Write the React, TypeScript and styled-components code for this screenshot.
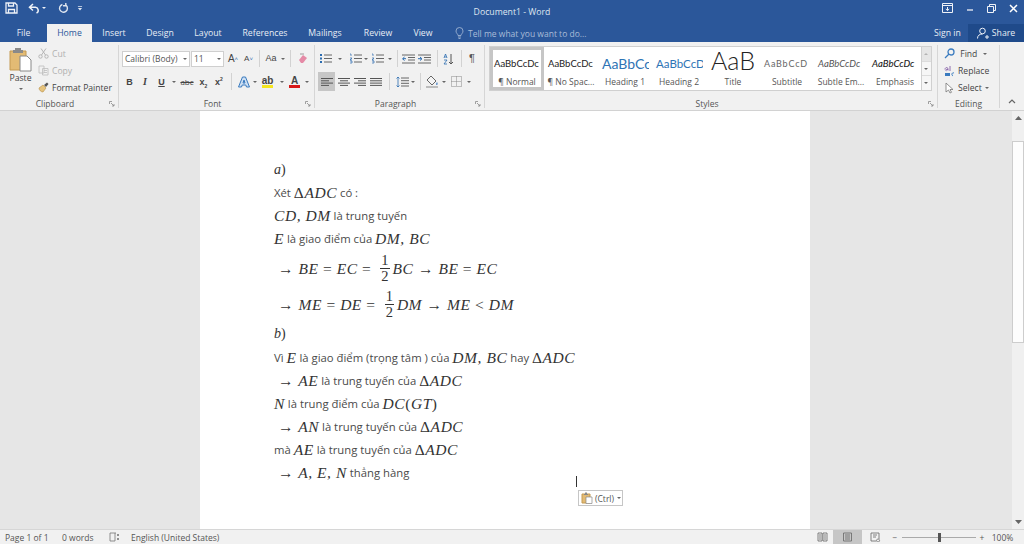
import React from 'react';
import styled, { createGlobalStyle } from 'styled-components';

const GlobalStyle = createGlobalStyle`
  html, body { margin: 0; padding: 0; height: 544px; overflow: hidden; background: #e6e6e6; }
  body { font-family: "Open Sans", "Noto Sans", sans-serif; font-size: 9px; color: #444; }
  #root { height: 544px; }
  svg { display: block; }
`;

const Window = styled.div`
  width: 1024px;
  height: 544px;
  display: flex;
  flex-direction: column;
`;

/* title bar */
const TitleBar = styled.header`
  height: 24px;
  flex: none;
  background: #2b579a;
  display: grid;
  grid-template-columns: 1fr auto 1fr;
  align-items: center;
  color: #e4eaf3;
`;

const QuickAccess = styled.div`
  display: flex;
  align-items: center;
  padding: 0 0 8px 3px;
`;

const Title = styled.div`
  font-size: 8.7px;
  text-align: center;
  color: #dfe6f0;
`;

const WindowButtons = styled.div`
  display: flex;
  justify-content: flex-end;
  align-items: center;
  padding-bottom: 8px;
`;

const WinButton = styled.span<{ $w: number; $ml?: number }>`
  width: ${p => p.$w}px;
  margin-left: ${p => p.$ml ?? 0}px;
  display: flex;
  justify-content: center;
`;

/* tabs */
const TabBar = styled.nav`
  height: 18px;
  flex: none;
  background: #2b579a;
  display: flex;
  align-items: stretch;
`;

const Tab = styled.div<{ $w: number; $active?: boolean }>`
  width: ${p => p.$w}px;
  flex: none;
  display: flex;
  align-items: center;
  justify-content: center;
  font-size: 8.7px;
  color: ${p => (p.$active ? '#2b579a' : '#e8edf5')};
  background: ${p => (p.$active ? '#f1f1f1' : 'transparent')};
`;

const TellMe = styled.div`
  margin-left: 13px;
  display: flex;
  align-items: center;
  gap: 4px;
  color: #a9bcd8;
  font-size: 8.5px;
  flex: 1;
`;

const SignIn = styled.div`
  width: 26px;
  margin-right: 8px;
  display: flex;
  align-items: center;
  color: #e8edf5;
  font-size: 8.7px;
  white-space: nowrap;
`;

const Share = styled.div`
  width: 56px;
  background: #1f4a8a;
  color: #e8edf5;
  display: flex;
  align-items: center;
  justify-content: center;
  gap: 3px;
  font-size: 8.7px;
`;

/* ribbon */
const Ribbon = styled.div`
  height: 69px;
  flex: none;
  background: #f1f1f1;
  border-bottom: 1px solid #d2d2d2;
  box-sizing: border-box;
  padding-top: 3px;
  display: flex;
`;

const Group = styled.section<{ $w: number }>`
  width: ${p => p.$w}px;
  flex: none;
  box-sizing: border-box;
  height: 63px;
  border-right: 1px solid #d6d6d6;
  display: flex;
  flex-direction: column;
`;

const GroupBody = styled.div<{ $pl?: number }>`
  height: 52px;
  flex: none;
  box-sizing: border-box;
  padding-left: ${p => p.$pl ?? 0}px;
  display: flex;
`;

const GroupLabel = styled.div<{ $plain?: boolean }>`
  display: grid;
  grid-template-columns: 1fr auto 1fr;
  align-items: center;
  height: 14px;
  padding-top: 1px;
  font-size: 8.5px;
  color: #555;
  padding-right: ${p => (p.$plain ? 0 : 8)}px;
  svg { justify-self: end; grid-column: 3; margin-right: -5px; }
`;

const GroupName = styled.span`
  grid-column: 2;
`;

const ToolRows = styled.div`
  display: flex;
  flex-direction: column;
  gap: 4px;
  padding-top: 4px;
`;

const ToolRow = styled.div`
  display: flex;
  align-items: center;
  height: 19px;
`;

const Tool = styled.span<{ $w: number; $on?: boolean }>`
  width: ${p => p.$w}px;
  height: 19px;
  flex: none;
  display: flex;
  align-items: center;
  justify-content: center;
  background: ${p => (p.$on ? '#c6c6c6' : 'transparent')};
  color: #444;
`;

const Sep = styled.span<{ $w: number }>`
  width: ${p => p.$w}px;
  flex: none;
  display: flex;
  justify-content: center;
  &::before { content: ''; width: 1px; height: 17px; background: #d2d2d2; }
`;

const Caret = styled.i<{ $w?: number; $c?: string; $ml?: number; $flip?: boolean; $faint?: boolean }>`
  width: ${p => p.$w ?? 7}px;
  margin-left: ${p => p.$ml ?? 0}px;
  flex: none;
  display: flex;
  justify-content: center;
  transform: ${p => (p.$flip ? 'rotate(180deg)' : 'none')};
  opacity: ${p => (p.$faint ? 0.4 : 1)};
  &::before {
    content: '';
    border-left: 2px solid transparent;
    border-right: 2px solid transparent;
    border-top: 2px solid ${p => p.$c ?? '#666'};
  }
`;

const PasteColumn = styled.div`
  width: 38px;
  flex: none;
  display: flex;
  flex-direction: column;
  align-items: center;
  padding: 2px 0 0 3px;
  box-sizing: border-box;
  font-size: 8.7px;
  line-height: 12px;
  color: #444;
`;

const PasteCaret = styled(Caret)`
  margin-top: 4px;
`;

const MiniStack = styled.div`
  display: flex;
  flex-direction: column;
`;

const MiniRow = styled.div<{ $off?: boolean }>`
  height: 17px;
  display: flex;
  align-items: center;
  gap: 3px;
  font-size: 8.6px;
  white-space: nowrap;
  color: ${p => (p.$off ? '#b0b0b0' : '#444')};
`;

const FontBox = styled.div<{ $w: number }>`
  width: ${p => p.$w}px;
  height: 16px;
  box-sizing: border-box;
  background: #fff;
  border: 1px solid #cfcfcf;
  margin-right: 1px;
  flex: none;
  display: flex;
  align-items: center;
  justify-content: space-between;
  padding: 0 2px;
  font-size: 8.5px;
  color: #555;
  white-space: nowrap;
`;

const Bold = styled.span`
  font-weight: 700;
  font-size: 9px;
  color: #444;
  font-family: "Liberation Sans", sans-serif;
`;

const Italic = styled(Bold)`
  font-style: italic;
  font-family: "Liberation Serif", serif;
  font-size: 10px;
`;

const Under = styled(Bold)`
  text-decoration: underline;
`;

const Strike = styled.span`
  font-size: 8px;
  text-decoration: line-through;
  color: #444;
`;

const Script = styled(Bold)`
  sub, sup { font-size: 5px; line-height: 0; }
`;

const Glyph = styled.span<{ $s: number; $c?: string }>`
  font-size: ${p => p.$s}px;
  color: ${p => p.$c ?? '#444'};
  font-family: "Liberation Sans", sans-serif;
  line-height: 1;
`;

const LetterBar = styled.span<{ $c: string }>`
  display: flex;
  flex-direction: column;
  align-items: center;
  font-weight: 700;
  font-size: 10px;
  line-height: 9px;
  color: #444;
  font-family: "Liberation Sans", sans-serif;
  &::after { content: ''; width: 11px; height: 3px; background: ${p => p.$c}; }
`;

/* styles gallery */
const Gallery = styled.div`
  margin: 1px 0 0 4px;
  height: 45px;
  width: 433px;
  flex: none;
  box-sizing: border-box;
  background: #fff;
  border: 1px solid #d0d0d0;
  display: flex;
`;

const StyleItem = styled.div<{ $on?: boolean }>`
  width: 54px;
  flex: none;
  box-sizing: border-box;
  border: ${p => (p.$on ? '3px solid #c6c6c6' : '3px solid transparent')};
  display: flex;
  flex-direction: column;
  align-items: center;
  overflow: hidden;
`;

const Preview = styled.div<{ $size: number; $color?: string; $italic?: boolean; $bold?: boolean; $sp?: number; $light?: boolean }>`
  height: 26px;
  width: 100%;
  box-sizing: border-box;
  padding-left: ${p => (p.$light ? 0 : 1)}px;
  flex: none;
  display: flex;
  align-items: ${p => (p.$light ? 'flex-start' : 'center')};
  justify-content: ${p => (p.$light ? 'center' : 'flex-start')};
  white-space: nowrap;
  overflow: hidden;
  font-family: Lato, "Open Sans", sans-serif;
  line-height: ${p => (p.$light ? '21px' : 'normal')};
  font-weight: ${p => (p.$light ? 300 : p.$bold ? 500 : 400)};
  font-size: ${p => p.$size}px;
  color: ${p => p.$color ?? '#222'};
  font-style: ${p => (p.$italic ? 'italic' : 'normal')};
  letter-spacing: ${p => p.$sp ?? 0}px;
`;

const StyleName = styled.div`
  font-size: 8.5px;
  color: #555;
  white-space: nowrap;
  line-height: 12px;
`;

const GalleryArrows = styled.div`
  width: 10px;
  flex: none;
  height: 45px;
  margin-top: 1px;
  box-sizing: border-box;
  border: 1px solid #d0d0d0;
  border-left: none;
  display: flex;
  flex-direction: column;
`;

const GalleryArrow = styled.span<{ $dim?: boolean }>`
  flex: 1;
  display: flex;
  align-items: center;
  border-bottom: 1px solid #dcdcdc;
  background: ${p => (p.$dim ? '#e6e6e6' : '#f6f6f6')};
  &:last-child { border-bottom: none; }
`;

const EditStack = styled.div`
  display: flex;
  flex-direction: column;
  padding-left: 6px;
`;

const Collapse = styled.div`
  flex: 1;
  display: flex;
  align-items: flex-end;
  justify-content: flex-end;
  padding: 0 8px 4px 0;
  height: 63px;
  box-sizing: border-box;
`;

/* document */
const Workspace = styled.main`
  flex: 1;
  min-height: 0;
  display: flex;
  background: #e6e6e6;
`;

const Canvas = styled.div`
  flex: 1;
  padding-left: 200px;
  overflow: hidden;
`;

const Page = styled.article`
  position: relative;
  width: 610px;
  height: 100%;
  box-sizing: border-box;
  background: #fff;
  padding: 47px 0 0 74px;
  font-size: 11.3px;
  color: #4a4a4a;
`;

const Line = styled.div<{ $h?: number; $indent?: boolean }>`
  height: ${p => p.$h ?? 23}px;
  display: flex;
  align-items: center;
  white-space: pre;
  padding-left: ${p => (p.$indent ? 4 : 0)}px;
`;

const M = styled.span`
  font-family: "Liberation Serif", serif;
  font-style: italic;
  font-size: 15.5px;
  letter-spacing: 0.55px;
  color: #333;
`;

const PartLabel = styled(M)`
  font-size: 14px;
  letter-spacing: 0;
`;

const Up = styled.span`
  font-style: normal;
`;

const Frac = styled.span`
  display: inline-flex;
  flex-direction: column;
  align-items: center;
  margin: 0 3px 0 9px;
  font-family: "Liberation Serif", serif;
  font-size: 14.5px;
  line-height: 15px;
  color: #333;
`;

const FracTop = styled.span`
  padding: 0 1px;
  border-bottom: 1px solid #333;
`;

const TextCursor = styled.span`
  position: absolute;
  left: 376px;
  top: 365px;
  width: 1px;
  height: 11px;
  background: #333;
`;

const PasteChip = styled.div`
  position: absolute;
  left: 378px;
  top: 379px;
  width: 45px;
  height: 16px;
  box-sizing: border-box;
  background: #fff;
  border: 1px solid #c6c6c6;
  display: flex;
  align-items: center;
  gap: 2px;
  padding-left: 2px;
  font-size: 8.5px;
  color: #555;
`;

const ScrollBar = styled.aside`
  width: 12px;
  flex: none;
  background: #f0f0f0;
  display: flex;
  flex-direction: column;
  align-items: stretch;
`;

const ScrollArrow = styled.span<{ $down?: boolean }>`
  height: 14px;
  display: flex;
  align-items: center;
  justify-content: center;
  margin-top: ${p => (p.$down ? 'auto' : '0')};
`;

const ScrollThumb = styled.span`
  height: 202px;
  margin-top: 16px;
  box-sizing: border-box;
  background: #fdfdfd;
  border: 1px solid #cdcdcd;
`;

/* status bar */
const StatusBar = styled.footer`
  height: 15px;
  flex: none;
  background: #f1f1f1;
  border-top: 1px solid #d6d6d6;
  box-sizing: border-box;
  display: flex;
  align-items: center;
  font-size: 8.5px;
  color: #555;
  padding-left: 5px;
`;

const StatusItem = styled.span<{ $w: number; $on?: boolean; $center?: boolean }>`
  width: ${p => p.$w}px;
  flex: none;
  height: 14px;
  display: flex;
  align-items: center;
  justify-content: ${p => (p.$center ? 'center' : 'flex-start')};
  background: ${p => (p.$on ? '#c6c6c6' : 'transparent')};
  white-space: nowrap;
`;

const Slider = styled.span`
  position: relative;
  width: 74px;
  height: 1px;
  flex: none;
  background: #aaa;
`;

const SliderThumb = styled.span`
  position: absolute;
  left: 36px;
  top: -4px;
  width: 3px;
  height: 9px;
  background: #555;
`;

/* drawings */
const Launcher = () => (
  <svg width="6" height="6" viewBox="0 0 6 6" fill="none" stroke="#8a8a8a" strokeWidth="0.8">
    <path d="M.5 3V.5H3M2 2l3 3M5 3v2H3" />
  </svg>
);

const Lines = ({ a }: { a: 'l' | 'c' | 'r' | 'j' }) => {
  const rows: [number, number][] = {
    l: [[0, 12], [0, 8], [0, 12], [0, 8]],
    c: [[0, 12], [2, 10], [0, 12], [2, 10]],
    r: [[0, 12], [4, 12], [0, 12], [4, 12]],
    j: [[0, 12], [0, 12], [0, 12], [0, 12]],
  }[a] as [number, number][];
  return (
    <svg width="12" height="10" viewBox="0 0 12 10" stroke="#555" strokeWidth="1">
      {rows.map(([x1, x2], i) => <line key={i} x1={x1} x2={x2} y1={1.5 + i * 2.3} y2={1.5 + i * 2.3} />)}
    </svg>
  );
};

const ListIcon = ({ num }: { num?: boolean }) => (
  <svg width="13" height="11" viewBox="0 0 13 11" fill="none">
    <path d="M5 2h8M5 5.5h8M5 9h8" stroke="#666" />
    {num
      ? <path d="M1 1h1v2M1 5h2L1 7h2M1 8h2v2H1" stroke="#2b6cb0" strokeWidth=".7" />
      : <path d="M1 1h2v2H1zM1 4.5h2v2H1zM1 8h2v2H1z" fill="#2b6cb0" />}
  </svg>
);

const IndentIcon = ({ inc }: { inc?: boolean }) => (
  <svg width="13" height="10" viewBox="0 0 13 10" fill="none">
    <path d="M0 1h13M6 3.5h7M6 6h7M0 9h13" stroke="#666" />
    <path d={inc ? 'M0 4.700h3M2 3l2 1.800L2 6.500' : 'M4 4.700H1M2.500 3L.5 4.800 2.500 6.500'} stroke="#2b6cb0" />
  </svg>
);

const ViewIcon = ({ kind }: { kind: 'read' | 'print' | 'web' }) => (
  <svg width="11" height="10" viewBox="0 0 11 10" fill="none" stroke="#666" strokeWidth=".8">
    {kind === 'read' && <path d="M1 1h4v8H1zM6 1h4v8H6zM2 3h2M2 5h2M2 7h2M7 3h2M7 5h2M7 7h2" />}
    {kind === 'print' && <path d="M1.500 1h8v8h-8zM3 3h5M3 5h5M3 7h5" />}
    {kind === 'web' && <path d="M1 1h8v6M1 1v8h5M3 3h4M3 5h3M8 7a1.500 1.500 0 1 0 .1 0" />}
  </svg>
);

const Arrow = () => <Up>→</Up>;

const Delta = () => <Up>Δ</Up>;

const App: React.FC = () => (
  <Window>
    <GlobalStyle />
    <TitleBar>
      <QuickAccess>
        <WinButton $w={16}>
          <svg width="13" height="12" viewBox="0 0 13 12" fill="none" stroke="#eef2f8" strokeWidth="1.300">
            <path d="M1 1h9l2 2v8H1zM3.500 1v3h5V1M3.500 11V7.500h6V11" />
          </svg>
        </WinButton>
        <WinButton $w={14} $ml={8}>
          <svg width="12" height="11" viewBox="0 0 12 11" fill="none" stroke="#eef2f8" strokeWidth="1.500">
            <path d="M5 1L1.500 4.300 5 7.500M2 4.300h5.500a3 3 0 0 1 1 5.700" />
          </svg>
        </WinButton>
        <Caret $w={6} $c="#eef2f8" />
        <WinButton $w={14} $ml={9}>
          <svg width="11" height="11" viewBox="0 0 12 12" fill="none" stroke="#dfe6f0" strokeWidth="1.500">
            <path d="M8.800 2.500a4.300 4.300 0 1 1-4-.9M8.500 0v3H5.500" />
          </svg>
        </WinButton>
        <WinButton $w={6} $ml={7}>
          <svg width="6" height="5" viewBox="0 0 7 6" fill="#dfe6f0">
            <path d="M1 0h5v1H1zM1 2.500h5L3.500 5.500z" />
          </svg>
        </WinButton>
      </QuickAccess>
      <Title>Document1 - Word</Title>
      <WindowButtons>
        <WinButton $w={22}>
          <svg width="11" height="10" viewBox="0 0 11 10" fill="none" stroke="#eef2f8">
            <path d="M.5.500h10v9H.500zM.5 2.500h10M5.500 4v3.500M3.800 6l1.700 1.500L7.200 6" />
          </svg>
        </WinButton>
        <WinButton $w={23}>
          <svg width="8" height="8" viewBox="0 0 8 8" stroke="#eef2f8" strokeWidth="1.300"><path d="M1 6h6" /></svg>
        </WinButton>
        <WinButton $w={21}>
          <svg width="9" height="9" viewBox="0 0 9 9" fill="none" stroke="#eef2f8">
            <path d="M.5 2.500h6v6h-6zM2.500 2.500v-2h6v6h-2" />
          </svg>
        </WinButton>
        <WinButton $w={22}>
          <svg width="9" height="9" viewBox="0 0 9 9" stroke="#fff" strokeWidth="1.500"><path d="M1 1l7 7M8 1L1 8" /></svg>
        </WinButton>
      </WindowButtons>
    </TitleBar>

    <TabBar>
      <Tab $w={47}>File</Tab>
      <Tab $w={45} $active>Home</Tab>
      <Tab $w={44}>Insert</Tab>
      <Tab $w={48}>Design</Tab>
      <Tab $w={48}>Layout</Tab>
      <Tab $w={66}>References</Tab>
      <Tab $w={54}>Mailings</Tab>
      <Tab $w={52}>Review</Tab>
      <Tab $w={38}>View</Tab>
      <TellMe>
        <svg width="9" height="12" viewBox="0 0 9 12" fill="none" stroke="#a9bcd8" strokeWidth=".8">
          <path d="M3 8.500C3 7 1 6.300 1 4a3.500 3.500 0 0 1 7 0c0 2.300-2 3-2 4.500zM3 10h3M3.500 11.500h2" />
        </svg>
        Tell me what you want to do...
      </TellMe>
      <SignIn>Sign in</SignIn>
      <Share>
        <svg width="12" height="12" viewBox="0 0 12 12" fill="none" stroke="#eef2f8">
          <circle cx="5.500" cy="4" r="2.800" />
          <path d="M.5 11.500c0-3 2-4.500 5-4.500M8 10h4M10 8v4" />
        </svg>
        Share
      </Share>
    </TabBar>

    <Ribbon>
      <Group $w={119}>
        <GroupBody>
          <PasteColumn>
            <svg width="24" height="25" viewBox="0 0 24 25">
              <path d="M1 4h16v19H1z" fill="#e3bb74" stroke="#c49a52" />
              <path d="M6 1h6v2h2v3H4V3h2z" fill="#8a8a8a" />
              <path d="M11 9h7l4 4v11H11z" fill="#fff" stroke="#888" />
            </svg>
            <span>Paste</span>
            <PasteCaret />
          </PasteColumn>
          <MiniStack>
            <MiniRow $off>
              <svg width="11" height="11" viewBox="0 0 11 11" fill="none" stroke="#b5b5b5">
                <circle cx="2.500" cy="8.500" r="1.700" /><circle cx="8.500" cy="8.500" r="1.700" />
                <path d="M3.500 7L8 .5M7.500 7L3 .5" />
              </svg>
              Cut
            </MiniRow>
            <MiniRow $off>
              <svg width="11" height="11" viewBox="0 0 11 11" fill="none" stroke="#bdbdbd" strokeWidth=".8">
                <path d="M1 1h5v7H1zM4.500 3.500H10V10H4.500z" />
                <path d="M6 5.500h3M6 7.500h3" />
              </svg>
              Copy
            </MiniRow>
            <MiniRow>
              <svg width="11" height="11" viewBox="0 0 11 11">
                <path d="M1 6l4-3 3 3-3 4c-2 0-4-2-4-4z" fill="#e6c37d" stroke="#b78f46" strokeWidth=".6" />
                <path d="M6 3l3-2.500L10.500 2 8 5z" fill="#555" />
              </svg>
              Format Painter
            </MiniRow>
          </MiniStack>
        </GroupBody>
        <GroupLabel><GroupName>Clipboard</GroupName><Launcher /></GroupLabel>
      </Group>

      <Group $w={196}>
        <GroupBody $pl={3}>
          <ToolRows>
            <ToolRow>
              <FontBox $w={68}>Calibri (Body)<Caret $w={5} /></FontBox>
              <FontBox $w={33}>11<Caret $w={5} /></FontBox>
              <Tool $w={16}><Glyph $s={10}>A</Glyph><Glyph $s={6} $c="#2b6cb0">˄</Glyph></Tool>
              <Tool $w={15}><Glyph $s={8}>A</Glyph><Glyph $s={6} $c="#2b6cb0">˅</Glyph></Tool>
              <Sep $w={7} />
              <Tool $w={16}><Glyph $s={9}>Aa</Glyph></Tool>
              <Caret $w={7} />
              <Sep $w={9} />
              <Tool $w={15}>
                <svg width="12" height="12" viewBox="0 0 12 12">
                  <path d="M2 7l4-5 4 3-4 5H4z" fill="#e58aa6" />
                  <path d="M3 1h4" stroke="#888" strokeWidth=".8" />
                </svg>
              </Tool>
            </ToolRow>
            <ToolRow>
              <Tool $w={15}><Bold>B</Bold></Tool>
              <Tool $w={16}><Italic>I</Italic></Tool>
              <Tool $w={17}><Under>U</Under></Tool>
              <Caret $w={8} />
              <Tool $w={18}><Strike>abc</Strike></Tool>
              <Tool $w={15}><Script>x<sub>2</sub></Script></Tool>
              <Tool $w={16}><Script>x<sup>2</sup></Script></Tool>
              <Sep $w={8} />
              <Tool $w={17}>
                <svg width="12" height="12" viewBox="0 0 12 12" fill="#cfe0f3" stroke="#3a7bbf">
                  <path d="M4.500 1h3L11.500 11H8.500l-.7-2H4.200l-.7 2H.5zM5 7h2L6 4z" />
                </svg>
              </Tool>
              <Caret $w={6} />
              <Tool $w={19}><LetterBar $c="#f5e61e">ab</LetterBar></Tool>
              <Caret $w={9} />
              <Tool $w={17}><LetterBar $c="#d81818">A</LetterBar></Tool>
              <Caret $w={8} />
            </ToolRow>
          </ToolRows>
        </GroupBody>
        <GroupLabel><GroupName>Font</GroupName><Launcher /></GroupLabel>
      </Group>

      <Group $w={170}>
        <GroupBody $pl={3}>
          <ToolRows>
            <ToolRow>
              <Tool $w={15}><ListIcon /></Tool>
              <Caret $w={13} />
              <Tool $w={18}><ListIcon num /></Tool>
              <Caret $w={4} />
              <Tool $w={18}><ListIcon num /></Tool>
              <Caret $w={7} />
              <Sep $w={8} />
              <Tool $w={15}><IndentIcon /></Tool>
              <Tool $w={17}><IndentIcon inc /></Tool>
              <Sep $w={8} />
              <Tool $w={14}>
                <svg width="11" height="12" viewBox="0 0 11 12" fill="none">
                  <path d="M1 5l1.500-4L4 5M1.500 4h2M1 7h3L1 11h3" stroke="#2b6cb0" strokeWidth=".8" />
                  <path d="M8 1v10M6 9l2 2 2-2" stroke="#555" />
                </svg>
              </Tool>
              <Sep $w={12} />
              <Tool $w={10}><Glyph $s={11} $c="#555">¶</Glyph></Tool>
            </ToolRow>
            <ToolRow>
              <Tool $w={17} $on><Lines a="l" /></Tool>
              <Tool $w={17}><Lines a="c" /></Tool>
              <Tool $w={16}><Lines a="r" /></Tool>
              <Tool $w={16}><Lines a="j" /></Tool>
              <Sep $w={11} />
              <Tool $w={14}>
                <svg width="13" height="12" viewBox="0 0 13 12" fill="none">
                  <path d="M5 2h8M5 4.700h8M5 7.300h8M5 10h8" stroke="#666" />
                  <path d="M2 1v10M.5 2.500L2 1l1.500 1.500M.5 9.500L2 11l1.500-1.500" stroke="#2b6cb0" strokeWidth=".8" />
                </svg>
              </Tool>
              <Caret $w={8} />
              <Sep $w={6} />
              <Tool $w={18}>
                <svg width="14" height="13" viewBox="0 0 14 13" fill="none">
                  <path d="M6 1l5 5-4 4-5-5z" fill="#f4f4f4" stroke="#666" />
                  <path d="M12 7c1 1.500 1 3-.3 3S11 8.500 12 7z" fill="#5b8fc9" />
                  <path d="M1 12h12" stroke="#888" />
                </svg>
              </Tool>
              <Caret $w={6} />
              <Tool $w={18}>
                <svg width="11" height="11" viewBox="0 0 11 11" fill="none" stroke="#888" strokeDasharray="1 1">
                  <path d="M.5.500h10v10H.500zM5.500.500v10M.5 5.500h10" />
                </svg>
              </Tool>
              <Caret $w={8} />
            </ToolRow>
          </ToolRows>
        </GroupBody>
        <GroupLabel><GroupName>Paragraph</GroupName><Launcher /></GroupLabel>
      </Group>

      <Group $w={453}>
        <GroupBody>
          <Gallery>
            <StyleItem $on><Preview $size={9.5}>AaBbCcDc</Preview><StyleName>¶ Normal</StyleName></StyleItem>
            <StyleItem><Preview $size={9.5}>AaBbCcDc</Preview><StyleName>¶ No Spac...</StyleName></StyleItem>
            <StyleItem><Preview $size={14} $color="#2e74b5">AaBbCc</Preview><StyleName>Heading 1</StyleName></StyleItem>
            <StyleItem><Preview $size={11.5} $color="#2e74b5">AaBbCcD</Preview><StyleName>Heading 2</StyleName></StyleItem>
            <StyleItem><Preview $size={25} $light>AaB</Preview><StyleName>Title</StyleName></StyleItem>
            <StyleItem><Preview $size={9} $color="#666" $sp={0.8}>AaBbCcD</Preview><StyleName>Subtitle</StyleName></StyleItem>
            <StyleItem><Preview $size={9.5} $color="#555" $italic>AaBbCcDc</Preview><StyleName>Subtle Em...</StyleName></StyleItem>
            <StyleItem><Preview $size={9.5} $italic $bold>AaBbCcDc</Preview><StyleName>Emphasis</StyleName></StyleItem>
          </Gallery>
          <GalleryArrows>
            <GalleryArrow $dim><Caret $w={8} $flip $faint /></GalleryArrow>
            <GalleryArrow><Caret $w={8} /></GalleryArrow>
            <GalleryArrow><Caret $w={8} /></GalleryArrow>
          </GalleryArrows>
        </GroupBody>
        <GroupLabel><GroupName>Styles</GroupName><Launcher /></GroupLabel>
      </Group>

      <Group $w={62}>
        <GroupBody>
          <EditStack>
            <MiniRow>
              <svg width="11" height="11" viewBox="0 0 11 11" fill="none" stroke="#3a7bbf" strokeWidth="1.300">
                <circle cx="7" cy="4" r="3" /><path d="M5 6l-4 4" />
              </svg>
              &nbsp;Find<Caret $w={9} />
            </MiniRow>
            <MiniRow>
              <svg width="11" height="12" viewBox="0 0 11 12" fill="none">
                <path d="M1 4.500C1 2 4 2 4 4v1.500M4 4.500C2 3.500 1 6 2.500 5.700M6 1v5" stroke="#7a4fa0" strokeWidth=".8" />
                <path d="M1 8h5v3H1z" fill="#3a7bbf" />
                <path d="M10 8c-2-1-3 2-1 3" stroke="#3a7bbf" />
              </svg>
              Replace
            </MiniRow>
            <MiniRow>
              <svg width="11" height="12" viewBox="0 0 11 12" fill="#fff" stroke="#777" strokeWidth=".8">
                <path d="M2 1v9l2.500-2 1.500 3 1.500-.7L6 7.500h3z" />
              </svg>
              Select<Caret $w={5} />
            </MiniRow>
          </EditStack>
        </GroupBody>
        <GroupLabel $plain><GroupName>Editing</GroupName></GroupLabel>
      </Group>

      <Collapse>
        <svg width="8" height="5" viewBox="0 0 8 5" fill="none" stroke="#666" strokeWidth="1.200">
          <path d="M1 4l3-3 3 3" />
        </svg>
      </Collapse>
    </Ribbon>

    <Workspace>
      <Canvas>
        <Page>
          <Line><PartLabel>a<Up>)</Up></PartLabel></Line>
          <Line>Xét <M><Delta />ADC</M> có :</Line>
          <Line><M>CD, DM</M> là trung tuyến</Line>
          <Line><M>E</M> là giao điểm của <M>DM, BC</M></Line>
          <Line $h={37} $indent><M><Arrow /> BE <Up>=</Up> EC <Up>=</Up></M><Frac><FracTop>1</FracTop>2</Frac><M>BC <Arrow /> BE <Up>=</Up> EC</M></Line>
          <Line $h={35} $indent><M><Arrow /> ME <Up>=</Up> DE <Up>=</Up></M><Frac><FracTop>1</FracTop>2</Frac><M>DM <Arrow /> ME <Up>&lt;</Up> DM</M></Line>
          <Line $h={24}><PartLabel>b<Up>)</Up></PartLabel></Line>
          <Line>Vì <M>E</M> là giao điểm (trọng tâm ) của <M>DM, BC</M> hay <M><Delta />ADC</M></Line>
          <Line $indent><M><Arrow /> AE</M> là trung tuyến của <M><Delta />ADC</M></Line>
          <Line><M>N</M> là trung điểm của <M>DC<Up>(</Up>GT<Up>)</Up></M></Line>
          <Line $indent><M><Arrow /> AN</M> là trung tuyến của <M><Delta />ADC</M></Line>
          <Line>mà <M>AE</M> là trung tuyến của <M><Delta />ADC</M></Line>
          <Line $indent><M><Arrow /> A, E, N</M> thẳng hàng</Line>
          <TextCursor />
          <PasteChip>
            <svg width="12" height="12" viewBox="0 0 12 12">
              <path d="M1 2h8v9H1z" fill="#e3bb74" stroke="#c49a52" />
              <path d="M4 .5h2V2h1v1H3V2h1z" fill="#888" />
              <path d="M5 5h6v6.500H5z" fill="#fff" stroke="#888" strokeWidth=".7" />
            </svg>
            (Ctrl)<Caret $w={5} />
          </PasteChip>
        </Page>
      </Canvas>
      <ScrollBar>
        <ScrollArrow>
          <svg width="7" height="4" viewBox="0 0 7 4" fill="#666"><path d="M0 4l3.500-4L7 4z" /></svg>
        </ScrollArrow>
        <ScrollThumb />
        <ScrollArrow $down>
          <svg width="7" height="4" viewBox="0 0 7 4" fill="#666"><path d="M0 0l3.500 4L7 0z" /></svg>
        </ScrollArrow>
      </ScrollBar>
    </Workspace>

    <StatusBar>
      <StatusItem $w={57}>Page 1 of 1</StatusItem>
      <StatusItem $w={47}>0 words</StatusItem>
      <StatusItem $w={22}>
        <svg width="11" height="10" viewBox="0 0 11 10" fill="none" stroke="#777" strokeWidth=".8">
          <path d="M1 1h5v8H1zM6 1h1M8 2l2 2M10 2L8 4M8 6l2 2M10 6L8 8" />
        </svg>
      </StatusItem>
      <StatusItem $w={681}>English (United States)</StatusItem>
      <StatusItem $w={21} $center><ViewIcon kind="read" /></StatusItem>
      <StatusItem $w={29} $on $center><ViewIcon kind="print" /></StatusItem>
      <StatusItem $w={26} $center><ViewIcon kind="web" /></StatusItem>
      <StatusItem $w={14} $center>−</StatusItem>
      <Slider><SliderThumb /></Slider>
      <StatusItem $w={12} $center>+</StatusItem>
      <StatusItem $w={29} $center>100%</StatusItem>
    </StatusBar>
  </Window>
);

export default App;
